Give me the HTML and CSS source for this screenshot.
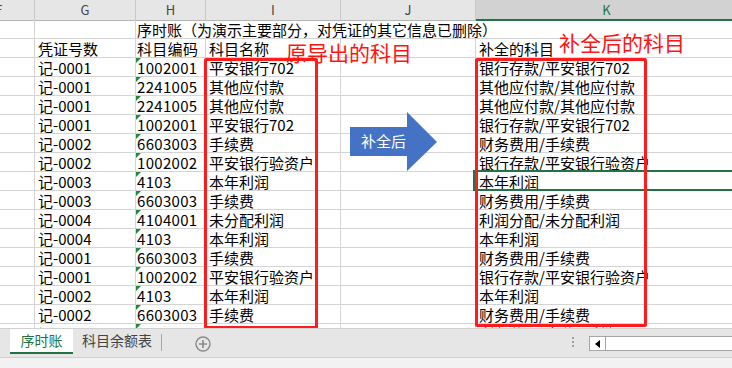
FILE: index.html
```html
<!doctype html>
<html>
<head>
<meta charset="UTF-8">
<title>序时账</title>
<link rel="stylesheet" href="styles.css">
</head>
<body>
<div class="book">
   <div class="sheet">
      <div class="grid">
         <div class="row head">
            <div class="c f">F</div><div class="c">G</div><div class="c">H</div><div class="c">I</div><div class="c">J</div><div class="c on">K</div>
         </div>
         <div class="row">
            <div class="c"></div><div class="c"></div><div class="c wide">序时账（为演示主要部分，对凭证的其它信息已删除）</div>
         </div>
         <div class="row">
            <div class="c"></div><div class="c">凭证号数</div><div class="c code">科目编码</div><div class="c">科目名称</div><div class="c"></div><div class="c">补全的科目</div>
         </div>
         <div class="row">
            <div class="c"></div><div class="c">记-0001</div><div class="c code flag">1002001</div><div class="c">平安银行702</div><div class="c"></div><div class="c">银行存款/平安银行702</div>
         </div>
         <div class="row">
            <div class="c"></div><div class="c">记-0001</div><div class="c code flag">2241005</div><div class="c">其他应付款</div><div class="c"></div><div class="c">其他应付款/其他应付款</div>
         </div>
         <div class="row">
            <div class="c"></div><div class="c">记-0001</div><div class="c code flag">2241005</div><div class="c">其他应付款</div><div class="c"></div><div class="c">其他应付款/其他应付款</div>
         </div>
         <div class="row">
            <div class="c"></div><div class="c">记-0001</div><div class="c code flag">1002001</div><div class="c">平安银行702</div><div class="c"></div><div class="c">银行存款/平安银行702</div>
         </div>
         <div class="row">
            <div class="c"></div><div class="c">记-0002</div><div class="c code flag">6603003</div><div class="c">手续费</div><div class="c"></div><div class="c">财务费用/手续费</div>
         </div>
         <div class="row">
            <div class="c"></div><div class="c">记-0002</div><div class="c code flag">1002002</div><div class="c">平安银行验资户</div><div class="c"></div><div class="c">银行存款/平安银行验资户</div>
         </div>
         <div class="row">
            <div class="c"></div><div class="c">记-0003</div><div class="c code flag">4103</div><div class="c">本年利润</div><div class="c"></div><div class="c">本年利润</div>
         </div>
         <div class="row">
            <div class="c"></div><div class="c">记-0003</div><div class="c code flag">6603003</div><div class="c">手续费</div><div class="c"></div><div class="c">财务费用/手续费</div>
         </div>
         <div class="row">
            <div class="c"></div><div class="c">记-0004</div><div class="c code flag">4104001</div><div class="c">未分配利润</div><div class="c"></div><div class="c">利润分配/未分配利润</div>
         </div>
         <div class="row">
            <div class="c"></div><div class="c">记-0004</div><div class="c code flag">4103</div><div class="c">本年利润</div><div class="c"></div><div class="c">本年利润</div>
         </div>
         <div class="row">
            <div class="c"></div><div class="c">记-0001</div><div class="c code flag">6603003</div><div class="c">手续费</div><div class="c"></div><div class="c">财务费用/手续费</div>
         </div>
         <div class="row">
            <div class="c"></div><div class="c">记-0001</div><div class="c code flag">1002002</div><div class="c">平安银行验资户</div><div class="c"></div><div class="c">银行存款/平安银行验资户</div>
         </div>
         <div class="row">
            <div class="c"></div><div class="c">记-0002</div><div class="c code flag">4103</div><div class="c">本年利润</div><div class="c"></div><div class="c">本年利润</div>
         </div>
         <div class="row">
            <div class="c"></div><div class="c">记-0002</div><div class="c code flag">6603003</div><div class="c">手续费</div><div class="c"></div><div class="c">财务费用/手续费</div>
         </div>
         <div class="row">
            <div class="c"></div><div class="c">记-0002</div><div class="c code flag">4104001</div><div class="c">未分配利润</div><div class="c"></div><div class="c">利润分配/未分配利润</div>
         </div>
      </div>

      <!-- selected cell K -->
      <div class="pick"></div>

      <!-- notes drawn over the sheet -->
      <div class="box box-a"></div>
      <div class="box box-b"></div>
      <div class="note note-a">原导出的科目</div>
      <div class="note note-b">补全后的科目</div>
      <div class="arrow">
         <svg width="88" height="60" viewBox="0 0 88 60">
            <polygon points="0,15 57,15 57,0 87,30 57,59 57,44 0,44" fill="#4472c4"/>
         </svg>
         <span>补全后</span>
      </div>
   </div>

   <div class="tabs">
      <div class="tab tab-on">序时账</div>
      <div class="tab tab-2">科目余额表</div>
      <div class="sep"></div>
      <svg class="add" width="16" height="16" viewBox="0 0 16 16">
         <circle cx="8" cy="8" r="7" fill="none" stroke="#8a8a8a" stroke-width="1.4"/>
         <path d="M4 8h8M8 4v8" stroke="#8a8a8a" stroke-width="1.6"/>
      </svg>
      <div class="grip"><i></i><i></i><i></i></div>
      <div class="scroll">
         <div class="btn"><svg width="5" height="8" viewBox="0 0 5 8"><polygon points="5,0 0,4 5,8" fill="#000"/></svg></div>
      </div>
   </div>
   <div class="status"></div>
</div>
</body>
</html>
```

FILE: styles.css
```css
* {
   box-sizing: border-box;
}

body {
   margin: 0;
   width: 732px;
   height: 368px;
   overflow: hidden;
   background: #fff;
   color: #000;
   font-family: "Noto Sans CJK SC", "Noto Sans", sans-serif;
}

.book {
   display: flex;
   flex-direction: column;
   height: 368px;
}

.sheet {
   position: relative;
   flex: none;
   height: 328px;
   overflow: hidden;
}

/* grid */
.row {
   display: grid;
   grid-template-columns: 35px 101px 70px 135px 135px 262px;
   height: 19px;
}

.c {
   position: relative;
   border-right: 1px solid #d4d4d4;
   border-bottom: 1px solid #d4d4d4;
   padding: 1px 0 0 3px;
   font-size: 15px;
   line-height: 17px;
   white-space: nowrap;
}

.c.code {
   padding-left: 1px;
   letter-spacing: 0.3px;
}

.c.wide {
   grid-column: 3 / 7;
   padding-left: 1px;
}

.c.flag::before {
   content: "";
   position: absolute;
   left: 0;
   top: 0;
   border-top: 5px solid #1f8a3b;
   border-right: 5px solid transparent;
}

.head {
   height: 20px;
   background: #e6e6e6;
}

.head .c {
   padding: 0;
   border-right-color: #c8c8c8;
   border-bottom: 1px solid #b4b4b4;
   text-align: center;
   font-size: 13px;
   line-height: 19px;
   color: #444;
}

.head .f {
   overflow: hidden;
   text-align: left;
   text-indent: -5px;
}

.head .on {
   background: #d2d2d2;
   border-bottom: 2px solid #217346;
   color: #217346;
}

/* overlays */
.pick {
   position: absolute;
   left: 473px;
   top: 170px;
   width: 280px;
   height: 21px;
   border: 2px solid #217346;
}

.box {
   position: absolute;
   border: 3px solid #ff1c1c;
   border-radius: 2px;
}

.box-a {
   left: 204px;
   top: 58px;
   width: 114px;
   height: 271px;
}

.box-b {
   left: 475px;
   top: 58px;
   width: 172px;
   height: 269px;
}

.note {
   position: absolute;
   font-size: 21px;
   line-height: 21px;
   color: #ff1414;
   white-space: nowrap;
}

.note-a {
   left: 286px;
   top: 42px;
}

.note-b {
   left: 559px;
   top: 32px;
}

.arrow {
   position: absolute;
   left: 350px;
   top: 112px;
   width: 88px;
   height: 60px;
}

.arrow svg {
   display: block;
}

.arrow span {
   position: absolute;
   left: 11px;
   top: 21px;
   font-size: 15px;
   line-height: 15px;
   color: #fff;
}

/* sheet tabs */
.tabs {
   display: flex;
   align-items: flex-start;
   flex: none;
   height: 29px;
   padding-left: 10px;
   background: #e6e6e6;
   border-top: 1px solid #d0d0d0;
   font-size: 14px;
}

.tabs > * {
   flex: none;
}

.tab {
   height: 25px;
   line-height: 23px;
   text-align: center;
   white-space: nowrap;
}

.tab-on {
   width: 63px;
   background: #fff;
   color: #217346;
   border-bottom: 2px solid #217346;
}

.tab-2 {
   width: 88px;
   color: #444;
}

.sep {
   width: 1px;
   height: 17px;
   margin-top: 5px;
   background: #a8a8a8;
}

.add {
   margin: 7px 0 0 33px;
}

.grip {
   display: flex;
   flex-direction: column;
   gap: 2px;
   margin: 8px 0 0 361px;
}

.grip i {
   width: 2px;
   height: 2px;
   background: #a0a0a0;
}

.scroll {
   display: flex;
   width: 143px;
   height: 15px;
   margin: 7px 0 0 15px;
   border: 1px solid #a6a6a6;
   border-right: none;
   background: #fff;
}

.scroll .btn {
   display: flex;
   align-items: center;
   justify-content: center;
   width: 16px;
   border-right: 1px solid #a6a6a6;
}

.status {
   flex: 1;
   background: #f2f2f2;
   border-top: 1px solid #cfcfcf;
}
```
